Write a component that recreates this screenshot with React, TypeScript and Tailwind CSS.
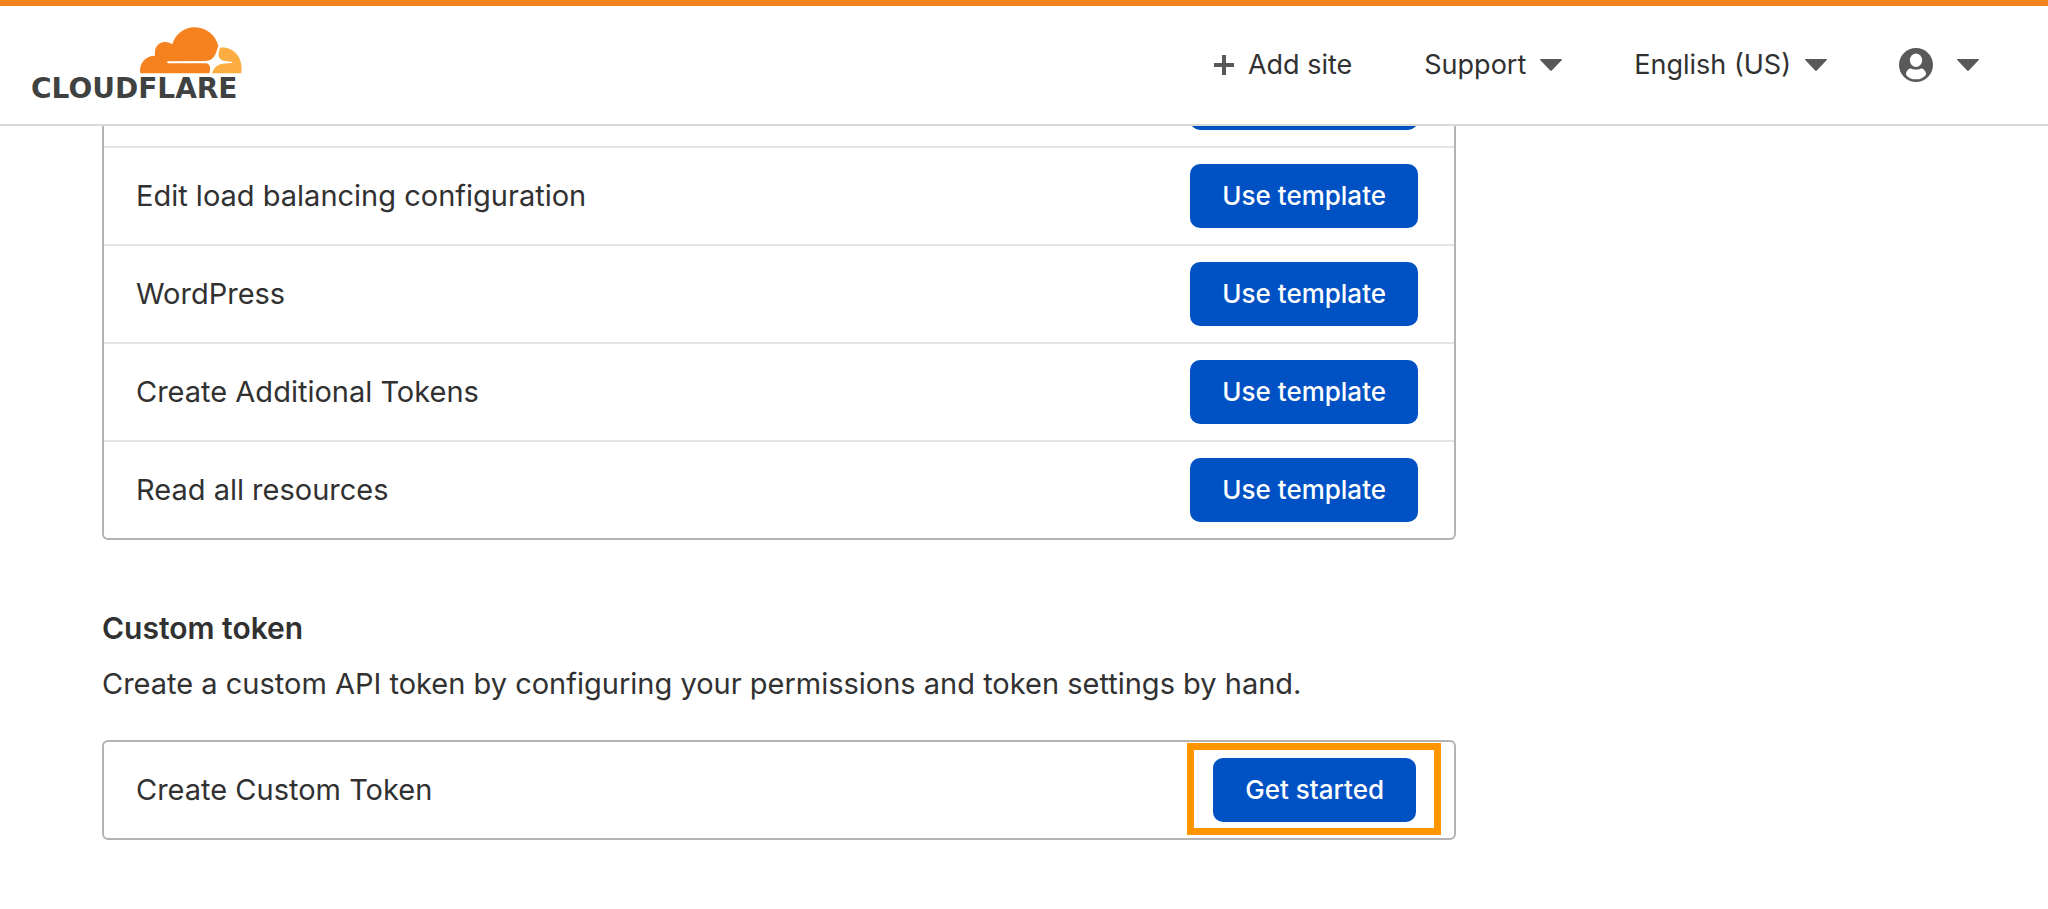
import type { ReactNode } from "react";

const templates = [
  "Edit load balancing configuration",
  "WordPress",
  "Create Additional Tokens",
  "Read all resources",
];

const Logo = () => (
  <a href="/" aria-label="Cloudflare" className="block">
    <svg width="216" height="80" viewBox="0 0 216 80" className="block">
      <g transform="translate(110 2) scale(0.3333)">
        <path
          fill="#f6821f"
          d="M1 139C-4 110 16 86 45 86C42 60 56 45 75 45C84 45 91 48 97 52C106 22 132 1 164 1C200 1 228 26 235 58C232 63 232 68 229 75C224 89 215 102 195 102L84 103C80 104 80 108 84 109L198 109C210 110 213 124 208 139Z"
        />
        <path
          fill="#fbad41"
          d="M240 62C278 58 311 88 304 139H216C220 126 229 112 248 110L274 108C278 107 278 105 274 104L254 102C238 100 233 86 237 73Z"
        />
      </g>
      <text
        x="1"
        y="73"
        fontSize="28"
        fontWeight="700"
        fill="#404242"
        fontFamily="'DejaVu Sans', sans-serif"
      >
        CLOUDFLARE
      </text>
    </svg>
  </a>
);

const Caret = () => (
  <svg width="22" height="12" viewBox="0 0 22 12" fill="#595959" aria-hidden="true">
    <path d="M0.5 0H21.5C22 0 22 0.8 21.6 1.2L11.8 11.4C11.3 12 10.7 12 10.2 11.4L0.4 1.2C0 0.8 0 0 0.5 0Z" />
  </svg>
);

const PlusIcon = () => (
  <svg width="20" height="20" viewBox="0 0 20 20" fill="#595959" aria-hidden="true">
    <path d="M8 0H12V8H20V12H12V20H8V12H0V8H8Z" />
  </svg>
);

const UserIcon = () => (
  <svg width="34" height="34" viewBox="0 0 103 103" aria-hidden="true">
    <circle cx="51.5" cy="51.5" r="51.5" fill="#595959" />
    <ellipse cx="51.5" cy="37" rx="18.5" ry="20.5" fill="#fff" />
    <path
      fill="#fff"
      d="M21 80C21 70 27 63 36 61C42 67 61 67 67 61C76 63 82 70 82 80C75 90 64 95 51 95C38 95 27 90 21 80Z"
    />
  </svg>
);

const Button = ({ children }: { children: ReactNode }) => (
  <button
    type="button"
    className="h-16 shrink-0 rounded-[10px] bg-[#0051c3] px-8 text-[26px] leading-8 font-medium text-white"
  >
    {children}
  </button>
);

const Row = ({ label, children }: { label: string; children: ReactNode }) => (
  <li className="flex items-center justify-between border-b-2 border-[#e3e3e3] py-4 pr-9 pl-8 last:border-b-0">
    <span className="text-[29px] leading-10">{label}</span>
    {children}
  </li>
);

const Header = () => (
  <header className="flex h-[126px] items-center justify-between border-t-6 border-b-2 border-t-[#f6821f] border-b-[#d9d9d9] bg-white pr-[69px] pl-[30px]">
    <Logo />
    <nav className="flex items-center gap-[72px] text-[27px] leading-10">
      <a href="/add-site" className="flex items-center gap-3.5">
        <PlusIcon />
        Add site
      </a>
      <button type="button" className="flex items-center gap-3.5">
        Support
        <Caret />
      </button>
      <button type="button" className="flex items-center gap-3.5">
        English (US)
        <Caret />
      </button>
      <button type="button" aria-label="Account" className="flex items-center gap-6">
        <UserIcon />
        <Caret />
      </button>
    </nav>
  </header>
);

export default function App() {
  return (
    <div className="min-h-screen bg-white font-[Inter,sans-serif] text-[#313131]">
      <Header />
      <main className="mr-12 ml-[102px] max-w-[1354px] pb-16">
        <div className="rounded-b-md border-2 border-t-0 border-[#b3b3b3]">
          {/* tail of the row that is scrolled under the header */}
          <div className="flex h-[22px] items-end justify-end overflow-hidden border-b-2 border-[#e3e3e3] pr-9 pb-4">
            <div className="h-16 w-[228px] shrink-0 rounded-[10px] bg-[#0051c3]" />
          </div>
          <ul>
            {templates.map((name) => (
              <Row key={name} label={name}>
                <Button>Use template</Button>
              </Row>
            ))}
          </ul>
        </div>

        <h2 className="mt-[68px] text-[30px] leading-10 font-semibold">Custom token</h2>
        <p className="mt-4 text-[29px] leading-10">
          Create a custom API token by configuring your permissions and token settings by hand.
        </p>

        <ul className="mt-9 rounded-md border-2 border-[#b3b3b3]">
          <Row label="Create Custom Token">
            <div className="relative mr-0.5">
              <Button>Get started</Button>
              <div className="pointer-events-none absolute -top-[15px] -right-[25px] -bottom-[13px] -left-[26px] border-7 border-[#ff9500]" />
            </div>
          </Row>
        </ul>
      </main>
    </div>
  );
}
